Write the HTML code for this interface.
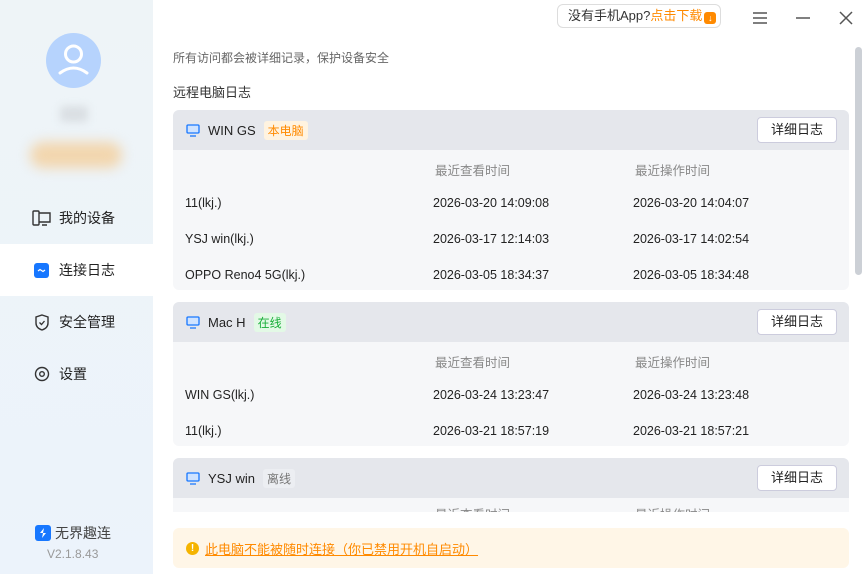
<!DOCTYPE html>
<html><head><meta charset="utf-8"><style>
*{margin:0;padding:0;box-sizing:border-box}
body{width:864px;height:574px;overflow:hidden;background:#fff;font-family:"Liberation Sans","Noto Sans CJK SC",sans-serif;font-size:13px;color:#222;position:relative}
.side{position:absolute;left:0;top:0;width:153px;height:574px;background:linear-gradient(180deg,#eef4f7 0%,#ecf3fb 100%)}
.av{position:absolute;left:46px;top:33px;width:55px;height:55px;border-radius:50%;background:#b6d3fd}
.nav{position:absolute;left:0;width:153px;height:52px;display:flex;align-items:center;padding-left:32px;font-size:14px;color:#222}
.nav .ic{width:19px;display:flex;justify-content:center;margin-right:8px}
.nav.act{background:#fff}
.main{position:absolute;left:173px;top:0;width:676px;height:512px;overflow:hidden}
.card{position:absolute;left:0;width:676px;border-radius:6px;overflow:hidden;background:#f6f7f9}
.hd{height:40px;background:#e5e7ec;display:flex;align-items:center;padding-left:13px;position:relative}
.hd .nm{margin-left:8px;font-size:13px;color:#222}
.tag{margin-left:8px;padding:1px 4px;border-radius:3px;font-size:12px}
.btn{position:absolute;right:12px;top:7px;width:80px;height:26px;border:1px solid #ccd;border-radius:4px;background:#fff;text-align:center;line-height:24px;font-size:13px}
.row{height:36px;position:relative;font-size:12.5px}
.row span{position:absolute;top:10px}
.gh{color:#888}
</style></head><body>
<div class="side">
<div class="av"><svg width="55" height="55" viewBox="0 0 55 55"><circle cx="27.5" cy="21" r="8" fill="none" stroke="#fff" stroke-width="3"/><path d="M14 40q13.5-10 27 0" fill="none" stroke="#fff" stroke-width="3" stroke-linecap="round"/></svg></div>
<div style="position:absolute;left:60px;top:106px;width:28px;height:16px;background:#dadfe3;filter:blur(4px);border-radius:4px"></div>
<div style="position:absolute;left:30px;top:142px;width:92px;height:26px;background:#f2d6ae;filter:blur(6px);border-radius:13px"></div>
<div class="nav" style="top:192px"><span class="ic"><svg width="19" height="16" viewBox="0 0 19 16"><rect x="1" y="1" width="6" height="14" rx="1" fill="none" stroke="#333" stroke-width="1.4"/><path d="M7 3h11v9H7M10 15h5" fill="none" stroke="#333" stroke-width="1.4"/></svg></span>我的设备</div>
<div class="nav act" style="top:244px"><span class="ic"><svg width="15" height="15" viewBox="0 0 15 15"><rect width="15" height="15" rx="3" fill="#1777ff"/><path d="M4 8l2-1.5 3 2 2-1.5" fill="none" stroke="#fff" stroke-width="1.3"/></svg></span>连接日志</div>
<div class="nav" style="top:296px"><span class="ic"><svg width="16" height="17" viewBox="0 0 16 17"><path d="M8 1l6 2v6c0 4-3 6-6 7-3-1-6-3-6-7V3z" fill="none" stroke="#333" stroke-width="1.4"/><path d="M5.5 8.5l2 2 3-3.5" fill="none" stroke="#333" stroke-width="1.3"/></svg></span>安全管理</div>
<div class="nav" style="top:348px"><span class="ic"><svg width="16" height="16" viewBox="0 0 16 16"><circle cx="8" cy="8" r="6.5" fill="none" stroke="#333" stroke-width="1.4"/><circle cx="8" cy="8" r="2.3" fill="none" stroke="#333" stroke-width="1.4"/></svg></span>设置</div>
<div style="position:absolute;left:35px;top:523px;display:flex;align-items:center;font-size:14px;color:#444"><svg width="16" height="16" viewBox="0 0 16 16"><rect width="16" height="16" rx="3" fill="#1777ff"/><path d="M9 3L5 8h3l-1 5 4-5H8z" fill="#fff"/></svg><span style="margin-left:4px">无界趣连</span></div>
<div style="position:absolute;left:47px;top:547px;font-size:12px;color:#999">V2.1.8.43</div>
</div>
<div style="position:absolute;left:557px;top:4px;width:164px;height:24px;border:1px solid #ddd;border-radius:6px;font-size:13px;line-height:22px;padding-left:10px;color:#333">没有手机App?<span style="color:#ff8a00">点击下载</span><span style="display:inline-block;width:12px;height:12px;background:#ff8a00;border-radius:3px;vertical-align:-1px;margin-left:2px;color:#fff;font-size:9px;line-height:12px;text-align:center">↓</span></div>
<svg style="position:absolute;left:752px;top:11px" width="16" height="14"><path d="M1 2h14M1 7h14M1 12h14" stroke="#555" stroke-width="1.5"/></svg>
<svg style="position:absolute;left:795px;top:11px" width="16" height="14"><path d="M1 7h14" stroke="#555" stroke-width="1.5"/></svg>
<svg style="position:absolute;left:838px;top:10px" width="16" height="16"><path d="M2 2l12 12M14 2L2 14" stroke="#555" stroke-width="1.5"/></svg>
<div style="position:absolute;left:855px;top:47px;width:7px;height:228px;background:#ccd0d6;border-radius:4px"></div>
<div style="position:absolute;left:173px;top:49px;font-size:12px;color:#666">所有访问都会被详细记录，保护设备安全</div>
<div style="position:absolute;left:173px;top:82px;font-size:13px;color:#333">远程电脑日志</div>
<div class="main">
<div class="card" style="top:110px;height:180px">
<div class="hd"><svg width="14" height="13"><rect x="1" y="1" width="12" height="8" rx="1" fill="#cfe3ff" stroke="#1777ff" stroke-width="1.3"/><path d="M4 12h6" stroke="#1777ff" stroke-width="1.3"/></svg><span class="nm">WIN GS</span><span class="tag" style="background:#fff3e0;color:#ff8a00">本电脑</span><div class="btn">详细日志</div></div>
<div class="row"><span class="gh" style="left:262px">最近查看时间</span><span class="gh" style="left:462px">最近操作时间</span></div>
<div class="row"><span style="left:12px">11(lkj.)</span><span style="left:260px">2026-03-20 14:09:08</span><span style="left:460px">2026-03-20 14:04:07</span></div>
<div class="row"><span style="left:12px">YSJ win(lkj.)</span><span style="left:260px">2026-03-17 12:14:03</span><span style="left:460px">2026-03-17 14:02:54</span></div>
<div class="row"><span style="left:12px">OPPO Reno4 5G(lkj.)</span><span style="left:260px">2026-03-05 18:34:37</span><span style="left:460px">2026-03-05 18:34:48</span></div>
</div>
<div class="card" style="top:302px;height:144px">
<div class="hd"><svg width="14" height="13"><rect x="1" y="1" width="12" height="8" rx="1" fill="#cfe3ff" stroke="#1777ff" stroke-width="1.3"/><path d="M4 12h6" stroke="#1777ff" stroke-width="1.3"/></svg><span class="nm">Mac H</span><span class="tag" style="background:#e3f9e6;color:#1aae3a">在线</span><div class="btn">详细日志</div></div>
<div class="row"><span class="gh" style="left:262px">最近查看时间</span><span class="gh" style="left:462px">最近操作时间</span></div>
<div class="row"><span style="left:12px">WIN GS(lkj.)</span><span style="left:260px">2026-03-24 13:23:47</span><span style="left:460px">2026-03-24 13:23:48</span></div>
<div class="row"><span style="left:12px">11(lkj.)</span><span style="left:260px">2026-03-21 18:57:19</span><span style="left:460px">2026-03-21 18:57:21</span></div>
</div>
<div class="card" style="top:458px;height:144px">
<div class="hd"><svg width="14" height="13"><rect x="1" y="1" width="12" height="8" rx="1" fill="#cfe3ff" stroke="#1777ff" stroke-width="1.3"/><path d="M4 12h6" stroke="#1777ff" stroke-width="1.3"/></svg><span class="nm">YSJ win</span><span class="tag" style="background:#eceef2;color:#777">离线</span><div class="btn">详细日志</div></div>
<div class="row"><span class="gh" style="left:262px;top:6px">最近查看时间</span><span class="gh" style="left:462px;top:6px">最近操作时间</span></div>
</div>
</div>
<div style="position:absolute;left:173px;top:528px;width:676px;height:40px;background:#fff6e7;border-radius:6px;display:flex;align-items:center;padding-left:13px;font-size:13px"><span style="display:inline-block;width:13px;height:13px;border-radius:50%;background:#f5b400;color:#fff;font-size:10px;line-height:13px;text-align:center;font-weight:bold">!</span><span style="margin-left:6px;color:#ff8a00;text-decoration:underline">此电脑不能被随时连接（你已禁用开机自启动）</span></div>
</body></html>
